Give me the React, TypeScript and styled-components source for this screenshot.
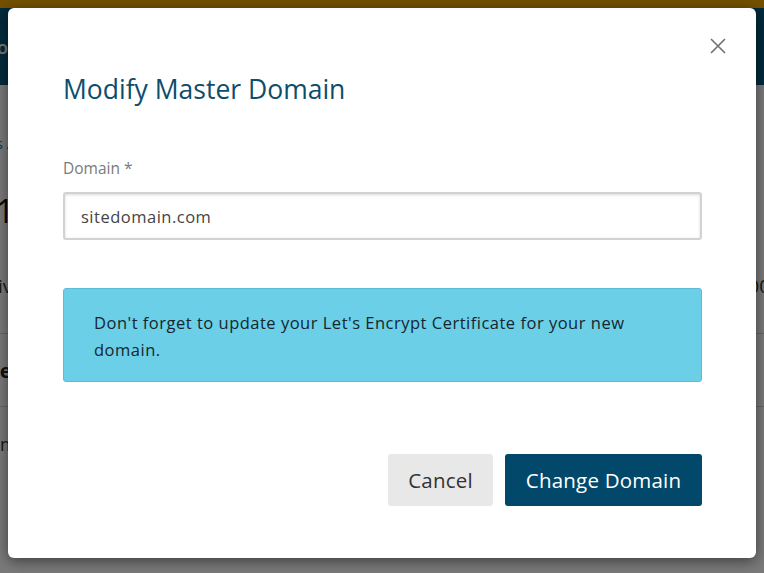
import * as React from "react";
import styled, { createGlobalStyle } from "styled-components";

const GlobalStyle = createGlobalStyle`
  html, body {
    margin: 0;
    padding: 0;
    height: 100%;
    overflow: hidden;
  }
  body {
    font-family: "Open Sans", "Noto Sans", sans-serif;
    background: #ffffff;
  }
  * {
    box-sizing: border-box;
  }
`;

const Page = styled.div`
  width: 764px;
  height: 573px;
  position: relative;
  overflow: hidden;
  background: #ffffff;
`;

const TopStripe = styled.div`
  height: 8px;
  background: #f2a900;
`;

const Header = styled.header`
  height: 77px;
  background: #005a7f;
  display: flex;
  align-items: center;
  color: #ffffff;
  font-size: 18px;
`;

const HeaderBrand = styled.span`
  margin-left: -14px;
  font-weight: 600;
`;

const Content = styled.main`
  display: flex;
  flex-direction: column;
  margin-left: -30px;
`;

const Crumb = styled.div`
  color: #1f6f9a;
  font-size: 15px;
  padding-top: 48px;
`;

const BigNumber = styled.div`
  color: #111;
  font-size: 32px;
  line-height: 40px;
  padding-top: 38px;
  margin-left: 26px;
`;

const StatRow = styled.div`
  display: flex;
  justify-content: space-between;
  align-items: center;
  height: 103px;
  padding-top: 8px;
  font-size: 19px;
  color: #333;
  border-bottom: 1px solid #d6d6d6;
  width: 800px;
`;

const SectionRow = styled.div`
  height: 73px;
  display: flex;
  align-items: center;
  font-size: 20px;
  font-weight: 700;
  color: #222;
  border-bottom: 1px solid #d6d6d6;
  width: 800px;
  padding-left: 4px;
`;

const PlainRow = styled.div`
  height: 74px;
  display: flex;
  align-items: center;
  font-size: 18px;
  color: #333;
  padding-left: 6px;
`;

const Overlay = styled.div`
  position: absolute;
  inset: 0;
  background: rgba(0, 0, 0, 0.52);
  display: flex;
  align-items: flex-start;
  justify-content: center;
  padding-top: 8px;
`;

const Dialog = styled.div`
  position: relative;
  width: 748px;
  height: 550px;
  background: #ffffff;
  border-radius: 6px;
  box-shadow: 0 3px 14px rgba(0, 0, 0, 0.5);
  padding: 64px 54px 0 55px;
  display: flex;
  flex-direction: column;
`;

const CloseButton = styled.button`
  position: absolute;
  top: 22px;
  right: 22px;
  width: 32px;
  height: 32px;
  border: none;
  background: transparent;
  padding: 0;
  cursor: pointer;
  display: flex;
  align-items: center;
  justify-content: center;
`;

const Title = styled.h2`
  margin: 0;
  font-weight: 400;
  font-size: 26.5px;
  line-height: 34px;
  color: #0e4d6c;
`;

const Label = styled.label`
  margin-top: 51px;
  font-size: 15.5px;
  line-height: 22px;
  color: #7a7a7a;
`;

const Input = styled.input`
  margin-top: 13px;
  height: 48px;
  width: 100%;
  border: 2px solid #d2d2d2;
  border-radius: 3px;
  box-shadow: inset 0 1px 3px rgba(0, 0, 0, 0.15);
  padding: 0 16px;
  font-family: inherit;
  font-size: 16.5px;
  letter-spacing: 0.5px;
  color: #444;
  outline: none;
`;

const Notice = styled.div`
  margin-top: 48px;
  background: #6bcfe8;
  border: 1px solid #5cbcd6;
  border-radius: 3px;
  padding: 20px 30px 18px 30px;
  font-size: 16.5px;
  letter-spacing: 0.5px;
  line-height: 27px;
  color: #15262e;
`;

const Actions = styled.div`
  margin-top: 72px;
  display: flex;
  justify-content: flex-end;
  gap: 12px;
`;

const Button = styled.button<{ $primary?: boolean }>`
  height: 52px;
  border: none;
  border-radius: 3px;
  padding: 0 12px;
  font-family: inherit;
  font-size: 20.5px;
  letter-spacing: 0.2px;
  cursor: pointer;
  background: ${(p) => (p.$primary ? "#02486a" : "#e8e8e8")};
  color: ${(p) => (p.$primary ? "#ffffff" : "#333333")};
  min-width: ${(p) => (p.$primary ? "197px" : "105px")};
`;

export default function App() {
  return (
    <Page>
      <GlobalStyle />
      <TopStripe />
      <Header>
        <HeaderBrand>Pos</HeaderBrand>
      </Header>
      <Content>
        <Crumb>Sites / Data</Crumb>
        <BigNumber>1</BigNumber>
        <StatRow>
          <span>Activity</span>
          <span>100</span>
        </StatRow>
        <SectionRow>Site</SectionRow>
        <PlainRow>Domain</PlainRow>
      </Content>
      <Overlay>
        <Dialog role="dialog" aria-labelledby="modal-title">
          <CloseButton aria-label="Close">
            <svg width="16" height="16" viewBox="0 0 16 16">
              <path
                d="M1 1 L15 15 M15 1 L1 15"
                stroke="#6f6f6f"
                strokeWidth="1.6"
                fill="none"
              />
            </svg>
          </CloseButton>
          <Title id="modal-title">Modify Master Domain</Title>
          <Label htmlFor="domain">Domain *</Label>
          <Input id="domain" defaultValue="sitedomain.com" />
          <Notice>
            Don't forget to update your Let's Encrypt Certificate for your new
            domain.
          </Notice>
          <Actions>
            <Button>Cancel</Button>
            <Button $primary>Change Domain</Button>
          </Actions>
        </Dialog>
      </Overlay>
    </Page>
  );
}
